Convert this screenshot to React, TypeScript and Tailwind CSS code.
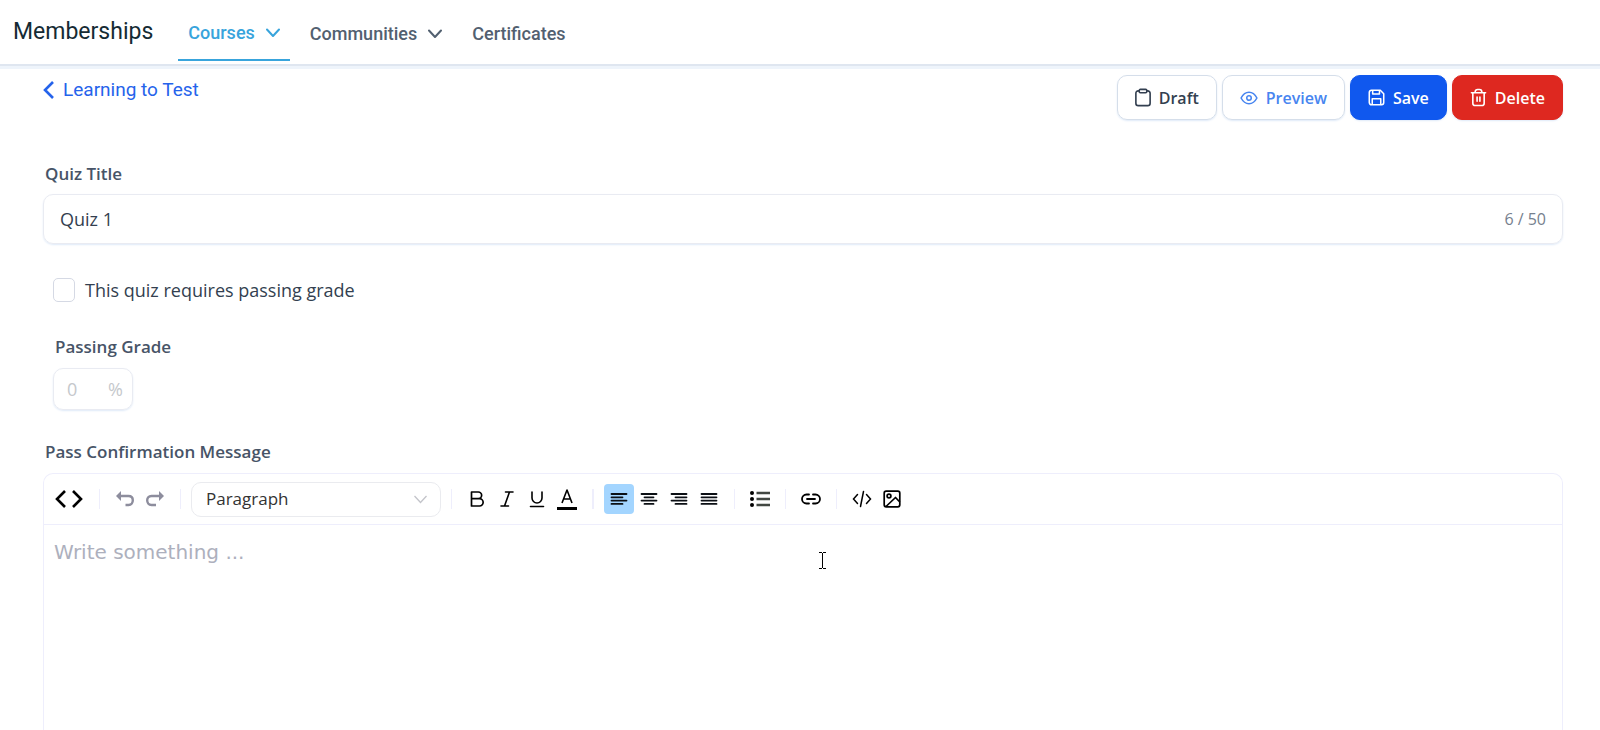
import React from 'react';

interface ToolButtonProps {
  label: string;
  active?: boolean;
  wide?: boolean;
  children: React.ReactNode;
}

function ToolButton({ label, active, wide, children }: ToolButtonProps) {
  return (
    <button
      type="button"
      aria-label={label}
      className={`flex h-[30px] items-center justify-center rounded ${wide ? 'w-10' : 'w-[30px]'} ${active ? 'bg-[#a3d5ff]' : ''}`}
    >
      {children}
    </button>
  );
}

function Separator({ thick }: { thick?: boolean }) {
  return <div className={`mx-[10px] h-5 bg-[#eeeefc] ${thick ? 'w-0.5' : 'w-px'}`} />;
}

function Chevron() {
  return (
    <svg width="14" height="10" viewBox="0 0 14 10" fill="none" stroke="currentColor" strokeWidth="2">
      <path d="M1 1.5l6 6.5 6-6.5" strokeLinecap="round" strokeLinejoin="round" />
    </svg>
  );
}

// horizontal strokes on a 18px grid, given as [start, end] per line
function AlignIcon({ lines }: { lines: [number, number][] }) {
  return (
    <svg width="18" height="18" viewBox="0 0 18 18" stroke="#0b0f14" strokeWidth="1.8" strokeLinecap="round">
      {lines.map(([from, to], idx) => (
        <path key={idx} d={`M${from} ${4 + idx * 3.3}H${to}`} />
      ))}
    </svg>
  );
}

const alignments: { label: string; lines: [number, number][] }[] = [
  { label: 'Align left', lines: [[1.5, 16.5], [1.5, 12.5], [1.5, 16.5], [1.5, 12.5]] },
  { label: 'Align center', lines: [[1.5, 16.5], [4.5, 13.5], [1.5, 16.5], [4.5, 13.5]] },
  { label: 'Align right', lines: [[1.5, 16.5], [5.5, 16.5], [1.5, 16.5], [5.5, 16.5]] },
  { label: 'Justify', lines: [[1.5, 16.5], [1.5, 16.5], [1.5, 16.5], [1.5, 16.5]] },
];

function Header() {
  return (
    <header className="flex h-[66px] items-start border-b-2 border-[#dfe6f0] pl-[13px] font-[Roboto] shadow-[0_3px_0_#eef4fb]">
      <h1 className="pt-[17px] text-[23px] leading-[30px] text-[#152b34]">Memberships</h1>
      <nav className="ml-[25px] flex items-start text-lg font-medium text-[#526070]">
        <a href="#courses" className="flex h-[61px] items-center gap-[11px] border-b-2 border-[#38a4dc] px-[10px] pt-[6px] text-[#38a4dc]">
          Courses
          <Chevron />
        </a>
        <a href="#communities" className="ml-[10px] flex h-[61px] items-center gap-[11px] px-[10px] pt-[6px]">
          Communities
          <Chevron />
        </a>
        <a href="#certificates" className="ml-[10px] flex h-[61px] items-center px-[10px] pt-[6px]">
          Certificates
        </a>
      </nav>
    </header>
  );
}

function Actions() {
  const base = 'flex h-[45px] items-center gap-2 rounded-[10px] border px-[17px] text-base font-semibold shadow-xs shadow-[#dfeaf8]';
  return (
    <div className="flex gap-[5px]">
      <button type="button" className={`${base} border-[#d5deea] text-[#333f50]`}>
        <svg width="16" height="19" viewBox="1 0 16 20" fill="none" stroke="currentColor" strokeWidth="1.7">
          <path d="M5 3H4a2.500 2.500 0 0 0-2.500 2.500v10.500A2.500 2.500 0 0 0 4 18.500h10a2.500 2.500 0 0 0 2.500-2.500V5.500A2.500 2.500 0 0 0 14 3h-1" />
          <rect x="5" y="1.500" width="8" height="3.500" rx="1.200" />
        </svg>
        Draft
      </button>
      <button type="button" className={`${base} border-[#d5deea] text-[#4785f0]`}>
        <svg width="18" height="18" viewBox="0 0 20 20" fill="none" stroke="currentColor" strokeWidth="1.700">
          <path d="M1.200 10S4.500 3.700 10 3.700 18.800 10 18.800 10s-3.300 6.300-8.800 6.300S1.200 10 1.200 10z" strokeLinejoin="round" />
          <circle cx="10" cy="10" r="2.500" />
        </svg>
        Preview
      </button>
      <button type="button" className={`${base} border-[#1058ee] bg-[#1058ee] text-white`}>
        <svg width="17" height="17" viewBox="0 0 20 20" fill="none" stroke="currentColor" strokeWidth="1.8" strokeLinejoin="round">
          <path d="M4 1.500h10.500l4 4V16a2.500 2.500 0 0 1-2.500 2.500H4A2.500 2.500 0 0 1 1.500 16V4A2.500 2.500 0 0 1 4 1.500z" />
          <path d="M5.500 1.500v4.500h8V1.500M5 18.500v-7h10v7" />
        </svg>
        Save
      </button>
      <button type="button" className={`${base} border-[#de2820] bg-[#de2820] text-white`}>
        <svg width="17" height="19" viewBox="0 0 18 20" fill="none" stroke="currentColor" strokeWidth="1.7" strokeLinecap="round">
          <path d="M1.500 5h15M3 5v11a2.500 2.500 0 0 0 2.500 2.500h7A2.500 2.500 0 0 0 15 16V5M5.500 5V4A2.500 2.500 0 0 1 8 1.500h2A2.500 2.500 0 0 1 12.500 4v1M7.500 9.500v4.500M10.500 9.500v4.500" />
        </svg>
        Delete
      </button>
    </div>
  );
}

function Toolbar() {
  return (
    <div role="toolbar" className="flex h-[51px] items-center border-b border-[#eeeefc] px-[5px] text-black">
      <ToolButton label="Source" wide>
        <svg width="28" height="18" viewBox="0 0 28 18" fill="none" stroke="currentColor" strokeWidth="2.6">
          <path d="M10 1L2 9l8 8M18 1l8 8-8 8" />
        </svg>
      </ToolButton>
      <Separator />
      <ToolButton label="Undo">
        <svg width="18" height="16" viewBox="0 0 18 16" fill="none" stroke="#8d8d9d" strokeWidth="2.4">
          <path d="M3 5h9.500c3 0 4.300 1.800 4.300 4.300s-1.300 4.700-4.300 4.700H9.500" />
          <path d="M5 0v10L0 5z" fill="#8d8d9d" stroke="none" />
        </svg>
      </ToolButton>
      <ToolButton label="Redo">
        <svg width="18" height="16" viewBox="0 0 18 16" fill="none" stroke="#8d8d9d" strokeWidth="2.4">
          <path d="M15 5H5.500C2.500 5 1.200 6.800 1.200 9.300S2.500 14 5.500 14h4.500" />
          <path d="M13 0v10l5-5z" fill="#8d8d9d" stroke="none" />
        </svg>
      </ToolButton>
      <Separator />
      <div className="relative">
        <select
          aria-label="Block style"
          className="h-[35px] w-[250px] appearance-none rounded-[10px] border border-[#eaebef] bg-white px-[14px] text-[17px] text-[#333]"
        >
          <option>Paragraph</option>
        </select>
        <svg
          className="pointer-events-none absolute top-[13px] right-[14px]"
          width="13"
          height="9"
          viewBox="0 0 13 9"
          fill="none"
          stroke="#c3c4ca"
          strokeWidth="1.3"
        >
          <path d="M.5 1l6 6.500 6-6.500" />
        </svg>
      </div>
      <Separator />
      <ToolButton label="Bold">
        <svg width="18" height="18" viewBox="0 0 18 18" fill="none" stroke="currentColor" strokeWidth="1.700" strokeLinejoin="round">
          <path d="M3.500 2h6.800a3.300 3.300 0 0 1 0 6.700H3.500zM3.500 8.700h8a3.600 3.600 0 0 1 0 7.300h-8z" />
        </svg>
      </ToolButton>
      <ToolButton label="Italic">
        <svg width="18" height="18" viewBox="0 0 18 18" fill="none" stroke="currentColor" strokeWidth="1.600" strokeLinecap="round">
          <path d="M7.500 2H15M3 16h7.500M11.500 2L6.500 16" />
        </svg>
      </ToolButton>
      <ToolButton label="Underline">
        <svg width="18" height="18" viewBox="0 0 18 18" fill="none" stroke="currentColor" strokeWidth="1.600" strokeLinecap="round">
          <path d="M4 2v6a5 5 0 0 0 10 0V2M2.500 16.500h13" />
        </svg>
      </ToolButton>
      <ToolButton label="Text color">
        <svg width="20" height="22" viewBox="0 0 20 22" fill="none" stroke="currentColor" strokeWidth="1.600">
          <path d="M5 15L10 2l5 13M6.500 11h7" strokeLinejoin="round" />
          <path d="M0 20.500h20" strokeWidth="3" />
        </svg>
      </ToolButton>
      <Separator thick />
      {alignments.map((item, idx) => (
        <ToolButton key={item.label} label={item.label} active={idx === 0}>
          <AlignIcon lines={item.lines} />
        </ToolButton>
      ))}
      <Separator />
      <ToolButton label="Bullet list">
        <svg width="20" height="18" viewBox="0 0 20 18">
          <path d="M6.500 3H20M6.500 9H20M6.500 15H20" stroke="#424742" strokeWidth="2.400" />
          <circle cx="2" cy="3" r="2" />
          <circle cx="2" cy="9" r="2" />
          <circle cx="2" cy="15" r="2" />
        </svg>
      </ToolButton>
      <Separator />
      <ToolButton label="Link">
        <svg width="20" height="12" viewBox="0 0 20 12" fill="none" stroke="currentColor" strokeWidth="1.800" strokeLinecap="round">
          <path d="M8 1.500H5.500a4.500 4.500 0 0 0 0 9H8M12 1.500h2.500a4.500 4.500 0 0 1 0 9H12M6 6h8" />
        </svg>
      </ToolButton>
      <Separator />
      <ToolButton label="Embed code">
        <svg width="20" height="18" viewBox="0 0 20 18" fill="none" stroke="currentColor" strokeWidth="1.500" strokeLinecap="round">
          <path d="M5.500 4.500L1.500 9l4 4.500M14.500 4.500l4 4.500-4 4.500M11.500 1.500l-3 15" />
        </svg>
      </ToolButton>
      <ToolButton label="Image">
        <svg width="18" height="18" viewBox="0 0 18 18" fill="none" stroke="currentColor" strokeWidth="1.700">
          <rect x="1.200" y="1.200" width="15.600" height="15.600" rx="2" />
          <circle cx="6" cy="6" r="1.900" />
          <path d="M3 16.500l9.500-9L16.800 12" strokeLinejoin="round" />
        </svg>
      </ToolButton>
    </div>
  );
}

export default function App() {
  return (
    <div className="flex min-h-screen flex-col bg-white font-['Open_Sans',sans-serif]">
      <Header />
      <main className="flex flex-1 flex-col pr-[37px] pl-[43px]">
        <div className="flex items-start justify-between pt-[9px]">
          <a href="#back" className="flex items-center gap-[9px] font-[Roboto] text-[19px] leading-[30px] text-[#2563eb]">
            <svg width="11" height="18" viewBox="0 0 11 18" fill="none" stroke="currentColor" strokeWidth="2.6">
              <path d="M10 1L2 9l8 8" />
            </svg>
            Learning to Test
          </a>
          <Actions />
        </div>

        <label htmlFor="quiz-title" className="mt-[41px] ml-[2px] text-[17px] leading-[26px] font-semibold text-[#475467]">
          Quiz Title
        </label>
        <div className="mt-[7px] flex h-[50px] items-center rounded-[10px] border border-[#e9ebf2] px-4 shadow-xs shadow-[#dfeaf8]">
          <input
            id="quiz-title"
            defaultValue="Quiz 1"
            maxLength={50}
            className="min-w-0 flex-1 text-lg text-[#333f50] outline-none"
          />
          <span className="text-base text-[#76808e]">6 / 50</span>
        </div>

        <div className="mt-[33px] ml-[10px] flex items-center gap-[10px]">
          <input
            id="requires-grade"
            type="checkbox"
            className="h-6 w-[22px] appearance-none rounded-[5px] border border-[#d5d9e4]"
          />
          <label htmlFor="requires-grade" className="text-lg leading-[26px] text-[#333f50]">
            This quiz requires passing grade
          </label>
        </div>

        <label htmlFor="passing-grade" className="mt-[31px] ml-3 text-[17px] leading-[26px] font-semibold text-[#475467]">
          Passing Grade
        </label>
        <div className="mt-2 ml-[10px] flex h-[42px] w-20 items-center justify-between rounded-[10px] border border-[#e9ebf2] pr-[9px] pl-[13px] text-lg text-[#c5c8cc] shadow-xs shadow-[#dfeaf8]">
          <input
            id="passing-grade"
            placeholder="0"
            disabled
            className="w-6 placeholder:text-[#c5c8cc]"
          />
          <span>%</span>
        </div>

        <label htmlFor="pass-message" className="mt-[29px] ml-[2px] text-[17px] leading-[26px] font-semibold text-[#475467]">
          Pass Confirmation Message
        </label>
        <div className="relative mt-2 flex flex-1 flex-col rounded-t-[10px] border border-b-0 border-[#eeeefc]">
          <Toolbar />
          <textarea
            id="pass-message"
            placeholder="Write something ..."
            className="w-full flex-1 resize-none px-[10px] py-[13px] font-['DejaVu_Sans'] text-xl text-[#333f50] outline-none placeholder:text-[#adb0bd]"
          />
          {/* text pointer */}
          <svg
            className="pointer-events-none absolute top-[78px] left-[775px]"
            width="7"
            height="17"
            viewBox="0 0 7 17"
            fill="none"
            stroke="black"
            shapeRendering="crispEdges"
          >
            <path d="M0 .5h3M4 .5h3M3.500 1v15M0 16.500h3M4 16.500h3" />
          </svg>
        </div>
      </main>
    </div>
  );
}
